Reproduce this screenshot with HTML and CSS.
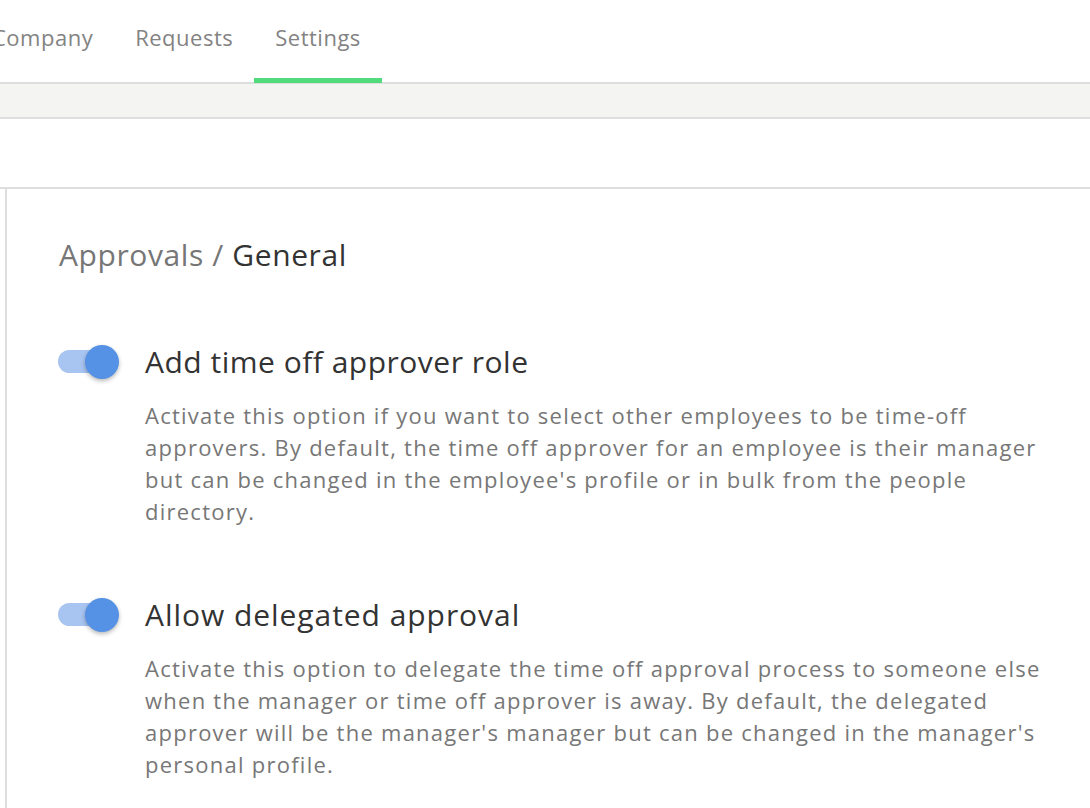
FILE: index.html
```html
<!DOCTYPE html>
<html lang="en">
<head>
<meta charset="utf-8">
<title>Settings – Approvals</title>
<link rel="stylesheet" href="styles.css">
</head>
<body>
<header class="topnav">
  <nav class="tabs">
    <a class="tab">Company</a>
    <a class="tab">Requests</a>
    <a class="tab tab-active">Settings</a>
  </nav>
</header>
<div class="band"></div>
<div class="toolbar"></div>
<div class="layout">
  <main class="content">
    <h1 class="crumbs"><span class="crumb-parent">Approvals / </span><span class="crumb-current">General</span></h1>

    <section class="setting">
      <div class="toggle toggle-on"><span class="toggle-track"></span><span class="toggle-knob"></span></div>
      <div class="setting-body">
        <h2 class="setting-title">Add time off approver role</h2>
        <p class="setting-desc">Activate this option if you want to select other employees to be time-off approvers. By default, the time off approver for an employee is their manager but can be changed in the employee's profile or in bulk from the people directory.</p>
      </div>
    </section>

    <section class="setting">
      <div class="toggle toggle-on"><span class="toggle-track"></span><span class="toggle-knob"></span></div>
      <div class="setting-body">
        <h2 class="setting-title setting-title-wide">Allow delegated approval</h2>
        <p class="setting-desc">Activate this option to delegate the time off approval process to someone else when the manager or time off approver is away. By default, the delegated approver will be the manager's manager but can be changed in the manager's personal profile.</p>
      </div>
    </section>
  </main>
</div>
</body>
</html>
```
FILE: styles.css
```css
* { box-sizing: border-box; }
html, body { margin: 0; padding: 0; }
body {
  font-family: "Open Sans", "Noto Sans", sans-serif;
  color: #333;
  background: #fff;
  overflow: hidden;
  height: 808px;
  display: flex;
  flex-direction: column;
}

.topnav {
  flex: none;
  height: 84px;
  border-bottom: 2px solid #dedede;
  background: #fff;
}
.tabs {
  display: flex;
  height: 82px;
  margin-left: -29px;
}
.tab {
  display: flex;
  align-items: flex-start;
  padding: 21px 21px 0;
  font-size: 22px;
  line-height: 32px;
  letter-spacing: 0.5px;
  color: #838383;
  text-decoration: none;
  border-bottom: 5px solid transparent;
  margin-bottom: -1px;
}
.tab-active {
  border-bottom-color: #52db7d;
}

.band {
  flex: none;
  height: 35px;
  background: #f4f4f3;
  border-bottom: 2px solid #dedede;
}
.toolbar {
  flex: none;
  height: 70px;
  border-bottom: 2px solid #dedede;
}

.layout {
  flex: 1;
  min-height: 0;
  display: flex;
  padding-left: 5px;
}
.content {
  flex: 1;
  border-left: 2px solid #dedede;
  padding: 46px 0 0 52px;
  overflow: hidden;
}

.crumbs {
  margin: 0 0 67px;
  font-size: 30px;
  line-height: 40px;
  font-weight: 400;
  letter-spacing: 0.6px;
}
.crumb-parent { color: #767676; }
.crumb-current { color: #333; }

.setting {
  display: grid;
  grid-template-columns: 86px 910px;
}
.setting + .setting {
  margin-top: 68px;
}
.toggle {
  position: relative;
  width: 61px;
  height: 40px;
  margin-left: -1px;
}
.toggle-track {
  position: absolute;
  left: 0;
  top: 8px;
  width: 50px;
  height: 23px;
  border-radius: 12px;
  background: #a8c4f1;
}
.toggle-knob {
  position: absolute;
  left: 27px;
  top: 3px;
  width: 34px;
  height: 34px;
  border-radius: 50%;
  background: #5591e4;
  box-shadow: 0 2px 4px rgba(0, 0, 0, 0.28);
}

.setting-title {
  margin: 0;
  font-size: 30px;
  line-height: 40px;
  font-weight: 400;
  letter-spacing: 0.5px;
  color: #333;
}
.setting-title-wide {
  letter-spacing: 0.95px;
}
.setting-desc {
  margin: 17px 0 0;
  font-size: 22px;
  line-height: 32px;
  letter-spacing: 1.25px;
  color: #777;
}
```
